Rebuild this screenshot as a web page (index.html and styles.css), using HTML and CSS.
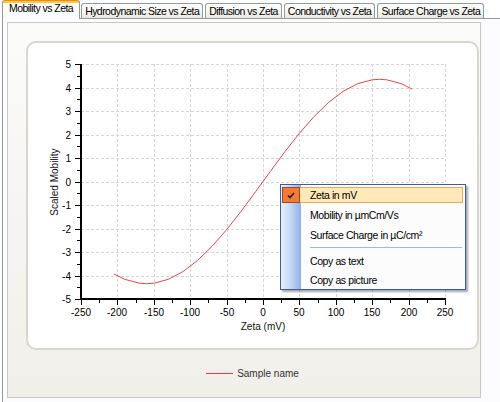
FILE: index.html
```html
<!DOCTYPE html>
<html>
<head>
<meta charset="utf-8">
<link rel="stylesheet" href="styles.css">
</head>
<body>
<div class="app">
  <div class="tabs">
    <div class="tab active">Mobility vs Zeta</div>
    <div class="tab">Hydrodynamic Size vs Zeta</div>
    <div class="tab">Diffusion vs Zeta</div>
    <div class="tab">Conductivity vs Zeta</div>
    <div class="tab">Surface Charge vs Zeta</div>
  </div>
  <div class="page">
    <div class="content">
      <div class="card">
        <svg class="plot" width="449" height="305" viewBox="28 43 449 305">
          <path class="grid" d="M117.5 64V299M154.5 64V299M190.5 64V299M227.5 64V299M263.5 64V299M299.5 64V299M336.5 64V299M372.5 64V299M409.5 64V299M445.5 64V299M81 64.5H446M81 88.5H446M81 111.5H446M81 135.5H446M81 158.5H446M81 182.5H446M81 205.5H446M81 229.5H446M81 252.5H446M81 276.5H446"/>
          <path class="ticks" d="M75 64.5H80M75 88.5H80M75 111.5H80M75 135.5H80M75 158.5H80M75 182.5H80M75 205.5H80M75 229.5H80M75 252.5H80M75 276.5H80M75 299.5H80M77 76.5H80M77 99.5H80M77 123.5H80M77 146.5H80M77 170.5H80M77 193.5H80M77 217.5H80M77 240.5H80M77 264.5H80M77 287.5H80M117.5 300V305M154.5 300V305M190.5 300V305M227.5 300V305M263.5 300V305M299.5 300V305M336.5 300V305M372.5 300V305M409.5 300V305M445.5 300V305M81.5 300V305M99.5 300V303M136.5 300V303M172.5 300V303M208.5 300V303M245.5 300V303M281.5 300V303M318.5 300V303M354.5 300V303M390.5 300V303M427.5 300V303"/>
          <rect class="axis" x="80" y="64" width="2" height="236"/>
          <rect class="axis" x="80" y="298" width="366" height="2"/>
          <g class="ylab">
            <text x="71" y="68">5</text>
            <text x="71" y="92">4</text>
            <text x="71" y="115">3</text>
            <text x="71" y="139">2</text>
            <text x="71" y="162">1</text>
            <text x="71" y="186">0</text>
            <text x="71" y="209">-1</text>
            <text x="71" y="233">-2</text>
            <text x="71" y="256">-3</text>
            <text x="71" y="280">-4</text>
            <text x="71" y="303">-5</text>
          </g>
          <g class="xlab">
            <text x="81" y="316">-250</text>
            <text x="117" y="316">-200</text>
            <text x="154" y="316">-150</text>
            <text x="190" y="316">-100</text>
            <text x="227" y="316">-50</text>
            <text x="263" y="316">0</text>
            <text x="299" y="316">50</text>
            <text x="336" y="316">100</text>
            <text x="372" y="316">150</text>
            <text x="409" y="316">200</text>
            <text x="445" y="316">250</text>
          </g>
          <text class="title" x="263" y="330">Zeta (mV)</text>
          <text class="title" x="58" y="182" transform="rotate(-90 58 182)">Scaled Mobility</text>
          <polyline class="curve" points="113.8,273.9 124.7,279.3 139.2,283.2 146.5,283.7 153.8,283.2 168.4,279.3 182.9,271.6 197.5,260.5 212,246.4 226.6,229.7 241.2,211.2 255.7,191.5 263,181.5 270.3,171.5 284.8,151.8 299.4,133.3 314,116.6 328.5,102.5 343.1,91.4 357.6,83.7 372.2,79.8 379.5,79.3 386.8,79.8 401.3,83.7 412.2,89.1"/>
        </svg>
      </div>
      <div class="legend">
        <span class="swatch"></span>
        <span class="legend-text">Sample name</span>
      </div>
    </div>
  </div>
  <div class="menu">
    <div class="item checked">
      <span class="check"><svg width="8" height="7" viewBox="0 0 8 7"><path d="M1 3.5L3 5.5L7 1" fill="none" stroke="#222" stroke-width="1.6"/></svg></span>
      <span>Zeta in mV</span>
    </div>
    <div class="item">Mobility in µmCm/Vs</div>
    <div class="item">Surface Charge in µC/cm²</div>
    <div class="sep"></div>
    <div class="item short">Copy as text</div>
    <div class="item short">Copy as picture</div>
  </div>
</div>
</body>
</html>
```
FILE: styles.css
```css
* { box-sizing: border-box; }
html, body { margin: 0; padding: 0; }
body {
  width: 500px;
  height: 402px;
  overflow: hidden;
  background: #ffffff;
  font-family: "Liberation Sans", Arial, sans-serif;
  color: #000;
}
.app {
  position: relative;
  width: 500px;
  height: 402px;
}
.tabs {
  display: flex;
  align-items: flex-end;
  height: 18px;
  padding-left: 2px;
  position: relative;
  z-index: 1;
}
.tab {
  height: 15px;
  padding: 0 3px;
  margin-right: 2px;
  border: 1px solid #919b9c;
  border-bottom: none;
  border-radius: 3px 3px 0 0;
  background: linear-gradient(#ffffff, #f4f3ef 60%, #e9e8e2);
  font-size: 10.5px;
  letter-spacing: -0.55px;
  line-height: 14px;
  white-space: nowrap;
}
.tab.active {
  height: 19px;
  margin-bottom: -1px;
  margin-right: 1px;
  padding: 0 6px;
  border-top: 1px solid #e68b2c;
  background: linear-gradient(#ffc83c 0, #ffc83c 2px, #fcfcfe 2px);
  line-height: 15px;
}
.page {
  margin-left: 2px;
  height: 384px;
  border-left: 1px solid #919b9c;
  border-top: 1px solid #919b9c;
  background: #fcfcfe;
  padding: 3px 0 0 4px;
}
.content {
  width: 474px;
  height: 376px;
  border: 1px solid #c9c7c0;
  background: linear-gradient(#fbfbfa, #f1efe9);
  padding: 18px 0 0 18px;
  display: flex;
  flex-direction: column;
}
.card {
  width: 453px;
  height: 309px;
  border: 2px solid #d9d6ce;
  border-radius: 10px;
  background: #ffffff;
}
.plot { display: block; }
.grid {
  fill: none;
  stroke: #d6d6d6;
  stroke-width: 1;
  stroke-dasharray: 3 2;
}
.ticks {
  fill: none;
  stroke: #000;
  stroke-width: 1;
}
.axis { fill: #000; }
.ylab text {
  font-size: 10px;
  text-anchor: end;
  fill: #000;
}
.xlab text {
  font-size: 10px;
  text-anchor: middle;
  fill: #000;
}
.title {
  font-size: 10px;
  text-anchor: middle;
  fill: #111;
}
.curve {
  fill: none;
  stroke: #f04444;
  stroke-width: 1;
}
.legend {
  width: 453px;
  height: 14px;
  margin-top: 16px;
  display: flex;
  justify-content: center;
  align-items: center;
  gap: 4px;
}
.swatch {
  width: 27px;
  height: 1px;
  background: #e83a3a;
}
.legend-text {
  font-size: 10px;
  color: #333;
}
.menu {
  position: absolute;
  left: 280px;
  top: 184px;
  width: 186px;
  height: 106px;
  border: 1px solid #3d5c9f;
  background: linear-gradient(to right, #e9f0fc, #c3d6f5 50%, #8fb0e6) 0 0 / 20px 100% no-repeat, #fcfcfc;
  box-shadow: 2px 2px 2px rgba(0, 0, 0, 0.35);
  font-size: 10.5px;
  letter-spacing: -0.4px;
}
.item {
  height: 20px;
  display: flex;
  align-items: center;
  padding-left: 29px;
  white-space: nowrap;
}
.item.short { height: 19px; }
.item.checked {
  position: relative;
  height: 16px;
  margin: 2px 2px 2px 1px;
  padding-left: 27px;
  border: 1px solid #eaa85a;
  background: #ffe9b8;
}
.check {
  position: absolute;
  left: -1px;
  top: -1px;
  width: 18px;
  height: 16px;
  border: 1px solid #9c4a1c;
  background: #f57b35;
  display: flex;
  align-items: center;
  justify-content: center;
}
.check svg { display: block; }
.sep {
  height: 6px;
  margin: 0 3px 0 29px;
  background: linear-gradient(#a3b8de, #a3b8de) 0 2px / 100% 1px no-repeat;
}
```
